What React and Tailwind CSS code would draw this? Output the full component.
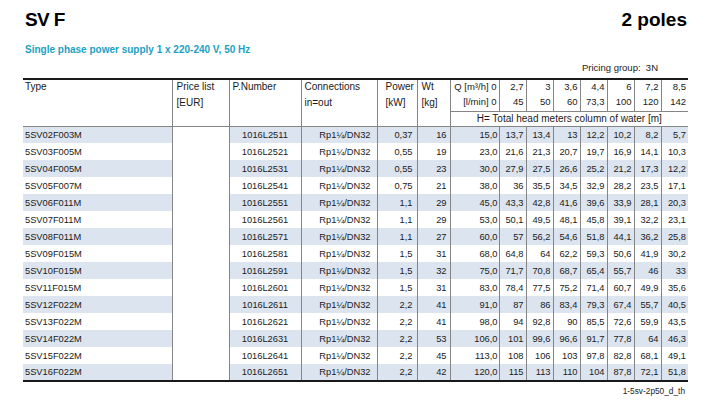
import React from "react";

const rows = [
  ["5SV02F003M", "1016L2511", "0,37", "16", ["15,0", "13,7", "13,4", "13", "12,2", "10,2", "8,2", "5,7"]],
  ["5SV03F005M", "1016L2521", "0,55", "19", ["23,0", "21,6", "21,3", "20,7", "19,7", "16,9", "14,1", "10,3"]],
  ["5SV04F005M", "1016L2531", "0,55", "23", ["30,0", "27,9", "27,5", "26,6", "25,2", "21,2", "17,3", "12,2"]],
  ["5SV05F007M", "1016L2541", "0,75", "21", ["38,0", "36", "35,5", "34,5", "32,9", "28,2", "23,5", "17,1"]],
  ["5SV06F011M", "1016L2551", "1,1", "29", ["45,0", "43,3", "42,8", "41,6", "39,6", "33,9", "28,1", "20,3"]],
  ["5SV07F011M", "1016L2561", "1,1", "29", ["53,0", "50,1", "49,5", "48,1", "45,8", "39,1", "32,2", "23,1"]],
  ["5SV08F011M", "1016L2571", "1,1", "27", ["60,0", "57", "56,2", "54,6", "51,8", "44,1", "36,2", "25,8"]],
  ["5SV09F015M", "1016L2581", "1,5", "31", ["68,0", "64,8", "64", "62,2", "59,3", "50,6", "41,9", "30,2"]],
  ["5SV10F015M", "1016L2591", "1,5", "32", ["75,0", "71,7", "70,8", "68,7", "65,4", "55,7", "46", "33"]],
  ["5SV11F015M", "1016L2601", "1,5", "31", ["83,0", "78,4", "77,5", "75,2", "71,4", "60,7", "49,9", "35,6"]],
  ["5SV12F022M", "1016L2611", "2,2", "41", ["91,0", "87", "86", "83,4", "79,3", "67,4", "55,7", "40,5"]],
  ["5SV13F022M", "1016L2621", "2,2", "41", ["98,0", "94", "92,8", "90", "85,5", "72,6", "59,9", "43,5"]],
  ["5SV14F022M", "1016L2631", "2,2", "53", ["106,0", "101", "99,6", "96,6", "91,7", "77,8", "64", "46,3"]],
  ["5SV15F022M", "1016L2641", "2,2", "45", ["113,0", "108", "106", "103", "97,8", "82,8", "68,1", "49,1"]],
  ["5SV16F022M", "1016L2651", "2,2", "42", ["120,0", "115", "113", "110", "104", "87,8", "72,1", "51,8"]],
];

const qh = ["2,7", "3", "3,6", "4,4", "6", "7,2", "8,5"];
const lm = ["45", "50", "60", "73,3", "100", "120", "142"];

const V = "border-l border-[#858585]";

export default function App() {
  return (
    <div
      className="w-[712px] h-[401px] bg-white text-[#1a1a1a] pl-[23px] pr-[24px] pt-[8px]"
      style={{ fontFamily: "'Liberation Sans', Arial, sans-serif" }}
    >
      <div className="flex justify-between items-start h-[24px] leading-[24px] text-[19px] font-bold text-black">
        <span className="pl-[2px] tracking-[-0.6px]">SV F</span>
        <span className="pr-[1px]">2 poles</span>
      </div>
      <div className="mt-[12px] pl-[2px] text-[10px] leading-[12px] font-bold text-[#1ba1c4]">
        Single phase power supply 1 x 220-240 V, 50 Hz
      </div>
      <div className="mt-[6px] pr-[30px] text-right text-[9.5px] leading-[12px]">Pricing group:&nbsp; 3N</div>
      <table className="mt-[4px] w-[665px] table-fixed border-collapse border-t-2 border-b-2 border-t-[#1a1a1a] border-b-[#1a1a1a]">
        <colgroup>
          <col className="w-[149px]" />
          <col className="w-[57px]" />
          <col className="w-[72px]" />
          <col className="w-[76px]" />
          <col className="w-[40px]" />
          <col className="w-[33px]" />
          <col className="w-[49px]" />
          <col className="w-[27px]" />
          <col className="w-[27px]" />
          <col className="w-[27px]" />
          <col className="w-[27px]" />
          <col className="w-[27px]" />
          <col className="w-[27px]" />
          <col className="w-[27px]" />
        </colgroup>
        <thead className="border-b border-[#858585] text-[10px] leading-[12px]">
          <tr className="h-[15px]">
            <td rowSpan={3} className="align-top p-0 pl-[2px]">
              <div className="pt-[1px]">Type</div>
            </td>
            <td rowSpan={3} className={`${V} align-top p-0 pl-[4px]`}>
              <div className="pt-[1px]">Price list</div>
              <div className="mt-[4px]">[EUR]</div>
            </td>
            <td rowSpan={3} className={`${V} align-top p-0 pl-[3px]`}>
              <div className="pt-[1px]">P.Number</div>
            </td>
            <td rowSpan={3} className={`${V} align-top p-0 pl-[3px]`}>
              <div className="pt-[1px]">Connections</div>
              <div className="mt-[4px]">in=out</div>
            </td>
            <td rowSpan={3} className={`${V} align-top p-0 pl-[8px] whitespace-nowrap`}>
              <div className="pt-[1px]">Power</div>
              <div className="mt-[4px]">[kW]</div>
            </td>
            <td rowSpan={3} className={`${V} align-top p-0 pl-[4px]`}>
              <div className="pt-[1px]">Wt</div>
              <div className="mt-[4px]">[kg]</div>
            </td>
            <td className={`${V} align-top p-0 pt-[1px] pr-[2px] text-right text-[9.5px] whitespace-nowrap`}>Q [m³/h] 0</td>
            {qh.map((v, i) => (
              <td key={i} className={`${V} align-top p-0 pt-[1px] pr-[2px] text-right text-[9.5px]`}>
                {v}
              </td>
            ))}
          </tr>
          <tr className="h-[17px]">
            <td className={`${V} border-b align-top p-0 pt-[2px] pr-[2px] text-right text-[9.5px] whitespace-nowrap`}>[l/min] 0</td>
            {lm.map((v, i) => (
              <td key={i} className={`${V} border-b align-top p-0 pt-[2px] pr-[2px] text-right text-[9.5px]`}>
                {v}
              </td>
            ))}
          </tr>
          <tr className="h-[15px]">
            <td colSpan={8} className={`${V} p-0 text-center align-middle`}>
              H= Total head meters column of water [m]
            </td>
          </tr>
        </thead>
        <tbody className="text-[9.3px] leading-[12px]">
          {rows.map(([type, pn, pw, wt, q], i) => (
            <tr key={type} className={`h-[17px] ${i % 2 === 0 ? "bg-[#dce4f0]" : "bg-white"}`}>
              <td className="p-0 pl-[2px] align-middle">{type}</td>
              <td className={`${V} p-0 bg-white`}></td>
              <td className={`${V} p-0 text-center`}>{pn}</td>
              <td className={`${V} p-0 pr-[6px] text-right`}>Rp1¼/DN32</td>
              <td className={`${V} p-0 pr-[4px] text-right`}>{pw}</td>
              <td className={`${V} p-0 pr-[3px] text-right`}>{wt}</td>
              {q.map((v, j) => (
                <td key={j} className={`${V} p-0 ${j === 0 ? "pr-[1px]" : "pr-[2px]"} text-right`}>
                  {v}
                </td>
              ))}
            </tr>
          ))}
        </tbody>
      </table>
      <div className="mt-[4px] pr-[3px] text-right text-[8.3px] leading-[10px]">1-5sv-2p50_d_th</div>
    </div>
  );
}
